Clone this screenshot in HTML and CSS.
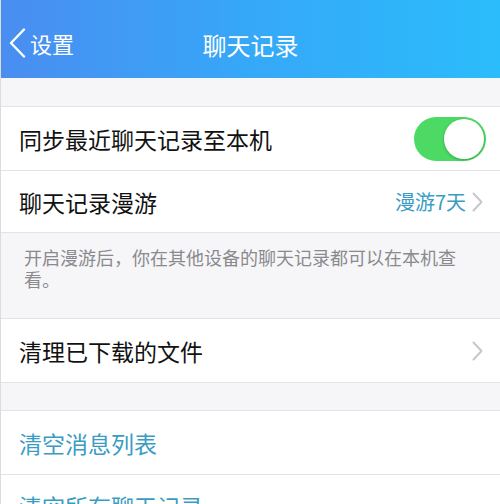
FILE: index.html
```html
<!DOCTYPE html>
<html lang="zh-CN">
<head>
  <meta charset="UTF-8">
  <meta name="viewport" content="width=device-width, initial-scale=1">
  <title>聊天记录</title>
  <link rel="stylesheet" href="styles.css">
</head>
<body>

  <!-- NAV BAR -->
  <div class="navbar">
    <div class="nav-back">
      <svg width="18" height="30" viewBox="0 0 18 30"><path d="M16 1.5 L3 15 L16 28.5" fill="none" stroke="#fff" stroke-width="2.4" stroke-linecap="round" stroke-linejoin="round"/></svg>
      <span>设置</span>
    </div>
    <div class="nav-title">聊天记录</div>
  </div>

  <div class="gap"></div>

  <div class="group">
    <div class="cell">
      <span class="label">同步最近聊天记录至本机</span>
      <div class="switch on"><div class="knob"></div></div>
    </div>
    <div class="cell">
      <span class="label">聊天记录漫游</span>
      <span class="detail">漫游7天</span>
      <svg class="chevron" width="11" height="20" viewBox="0 0 11 20"><path d="M1.5 1.5 L9.5 10 L1.5 18.5" fill="none" stroke="#c7c7cc" stroke-width="2" stroke-linecap="round" stroke-linejoin="round"/></svg>
    </div>
  </div>

  <div class="footnote">开启漫游后，你在其他设备的聊天记录都可以在本机查看。</div>

  <div class="group">
    <div class="cell">
      <span class="label">清理已下载的文件</span>
      <svg class="chevron" width="11" height="20" viewBox="0 0 11 20"><path d="M1.5 1.5 L9.5 10 L1.5 18.5" fill="none" stroke="#c7c7cc" stroke-width="2" stroke-linecap="round" stroke-linejoin="round"/></svg>
    </div>
  </div>

  <div class="gap small"></div>

  <div class="group">
    <div class="cell">
      <span class="label action">清空消息列表</span>
    </div>
    <div class="cell">
      <span class="label action">清空所有聊天记录</span>
    </div>
  </div>

</body>
</html>
```

FILE: styles.css
```css
* { margin: 0; padding: 0; box-sizing: border-box; }
body {
  font-family: "Noto Sans CJK SC", "Noto Sans", sans-serif;
  background: #f6f6f8; color: #111;
  border-left: 1px solid #dcdcdf;
  overflow: hidden;
}

/* NAV BAR */
.navbar {
  height: 78px; position: relative;
  display: flex; align-items: center; justify-content: center;
  background: linear-gradient(90deg, #4a8df1 0%, #36a8f8 50%, #2bbcfb 100%);
  color: #fff;
}
.nav-back {
  position: absolute; left: 7px; top: 28px;
  display: flex; align-items: center; gap: 4px;
  font-size: 22px; line-height: 30px;
}
.nav-title { font-size: 24px; padding-top: 10px; }

/* GAPS */
.gap { height: 29px; border-bottom: 1px solid #e3e3e6; }
.gap.small { height: 28px; }

/* GROUPS + CELLS */
.group { background: #fff; }
.cell {
  height: 64px; padding: 0 17px 0 18px;
  display: flex; align-items: center;
  border-bottom: 1px solid #e3e3e6;
}
.cell:nth-child(2) { height: 62px; }
.label { font-size: 23px; flex: 1; white-space: nowrap; }
.label.action { color: #3a9cc2; }
.detail { font-size: 20px; color: #3a9cc2; margin-right: 6px; }
.chevron { display: block; }

/* SWITCH */
.switch {
  width: 72px; height: 44px; border-radius: 22px;
  background: #e5e5ea; padding: 2px;
  display: flex;
}
.switch.on { background: #4cd964; justify-content: flex-end; margin-right: -3px; }
.knob {
  width: 40px; height: 40px; border-radius: 50%;
  background: #fff; box-shadow: 0 1px 3px rgba(0,0,0,0.25);
}

/* FOOTNOTE */
.footnote {
  height: 86px; padding: 13px 40px 0 23px;
  font-size: 18px; line-height: 22px; color: #8a8a8e;
  border-bottom: 1px solid #e3e3e6;
}
```
